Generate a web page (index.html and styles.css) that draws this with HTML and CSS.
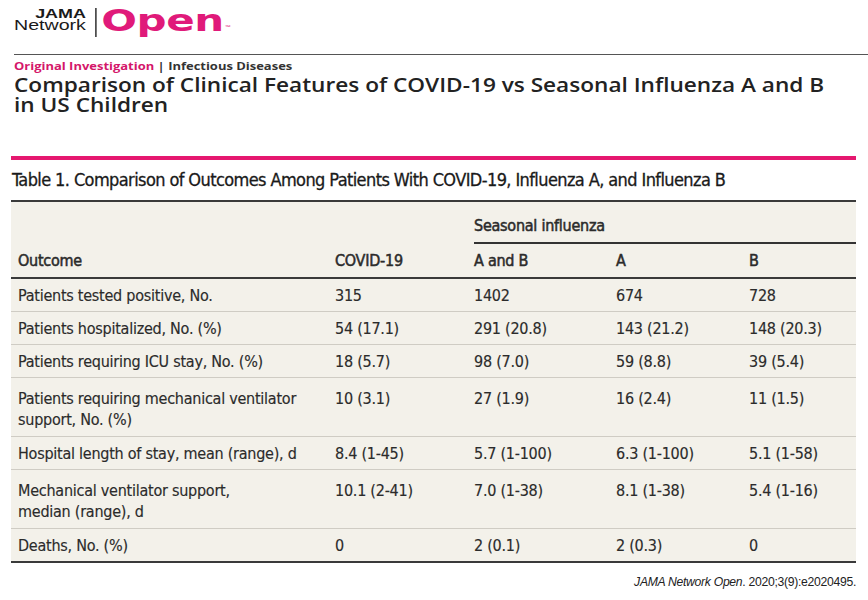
FILE: index.html
```html
<!DOCTYPE html>
<html lang="en">
<head>
<meta charset="utf-8">
<title>JAMA Network Open – Table 1</title>
<link rel="stylesheet" href="styles.css">
</head>
<body>
<header class="masthead">
  <div class="logo">
    <div class="logo-jn"><span class="logo-jama">JAMA</span><span class="logo-network">Network</span></div>
    <span class="logo-bar"></span>
    <span class="logo-open">Open</span><span class="logo-tm">™</span>
  </div>
</header>
<div class="rule"></div>
<div class="article-head">
  <p class="kicker"><span class="kicker-type">Original Investigation</span> <span class="kicker-sep">|</span> <span class="kicker-topic">Infectious Diseases</span></p>
  <h1 class="title">Comparison of Clinical Features of COVID-19 vs Seasonal Influenza A and B in US Children</h1>
</div>

<section class="tablebox">
  <h2 class="table-title">Table 1. Comparison of Outcomes Among Patients With COVID-19, Influenza A, and Influenza B</h2>
  <table class="data">
    <colgroup>
      <col class="c1"><col class="c2"><col class="c3"><col class="c4"><col class="c5">
    </colgroup>
    <thead>
      <tr class="hrow1">
        <th></th><th></th>
        <th colspan="3" class="span-cell"><div class="spanner">Seasonal influenza</div></th>
      </tr>
      <tr class="hrow2">
        <th>Outcome</th><th>COVID-19</th><th>A and B</th><th>A</th><th>B</th>
      </tr>
    </thead>
    <tbody>
      <tr><td>Patients tested positive, No.</td><td>315</td><td>1402</td><td>674</td><td>728</td></tr>
      <tr><td>Patients hospitalized, No. (%)</td><td>54 (17.1)</td><td>291 (20.8)</td><td>143 (21.2)</td><td>148 (20.3)</td></tr>
      <tr><td>Patients requiring ICU stay, No. (%)</td><td>18 (5.7)</td><td>98 (7.0)</td><td>59 (8.8)</td><td>39 (5.4)</td></tr>
      <tr class="two-line"><td>Patients requiring mechanical ventilator<br>support, No. (%)</td><td>10 (3.1)</td><td>27 (1.9)</td><td>16 (2.4)</td><td>11 (1.5)</td></tr>
      <tr><td>Hospital length of stay, mean (range), d</td><td>8.4 (1-45)</td><td>5.7 (1-100)</td><td>6.3 (1-100)</td><td>5.1 (1-58)</td></tr>
      <tr class="two-line"><td>Mechanical ventilator support,<br>median (range), d</td><td>10.1 (2-41)</td><td>7.0 (1-38)</td><td>8.1 (1-38)</td><td>5.4 (1-16)</td></tr>
      <tr><td>Deaths, No. (%)</td><td>0</td><td>2 (0.1)</td><td>2 (0.3)</td><td>0</td></tr>
    </tbody>
  </table>
</section>

<p class="cite"><em>JAMA Network Open</em>. 2020;3(9):e2020495.</p>
</body>
</html>
```

FILE: styles.css
```css
html, body {
  margin: 0;
  padding: 0;
  background: #ffffff;
}

body {
  font-family: "Open Sans", "Liberation Sans", sans-serif;
  color: #222;
  overflow-x: hidden;
}

/* ---------- masthead / logo ---------- */
.masthead {
  height: 54px;
  box-sizing: border-box;
  padding: 6px 0 0 14px;
}

.logo {
  display: flex;
  align-items: flex-start;
  width: max-content;
  transform: scaleX(1.4);
  transform-origin: left top;
}

.logo-jn {
  display: flex;
  flex-direction: column;
  align-items: flex-end;
  padding-top: 3px;
  font-family: "Liberation Sans", Arial, sans-serif;
  color: #1a1a1a;
}

.logo-jama {
  font-weight: 700;
  font-size: 12.8px;
  line-height: 10px;
}

.logo-network {
  font-size: 14px;
  line-height: 13px;
}

.logo-bar {
  width: 1.5px;
  height: 29px;
  margin: 2px 3px 0 6.5px;
  background: #222;
}

.logo-open {
  font-family: "DejaVu Sans", sans-serif;
  font-weight: 700;
  font-size: 30px;
  line-height: 30px;
  letter-spacing: -0.3px;
  color: #e01a7a;
}

.logo-tm {
  align-self: flex-end;
  margin: 0 0 7px 1px;
  font-size: 5px;
  line-height: 5px;
  color: #e01a7a;
}

/* ---------- article header ---------- */
.rule {
  height: 1px;
  margin-left: 14px;
  background: #555;
}

.article-head {
  width: 700px;
  margin-left: 14px;
  transform: scaleX(1.19);
  transform-origin: left top;
}

.kicker {
  margin: 5px 0 0;
  font-size: 10.9px;
  font-weight: 700;
  line-height: 12px;
}

.kicker-type {
  color: #d4166a;
}

.kicker-sep,
.kicker-topic {
  color: #333;
}

.title {
  max-width: 690px;
  margin: 3px 0 0;
  font-size: 19px;
  font-weight: 600;
  line-height: 20px;
  color: #222;
}

/* ---------- table ---------- */
.tablebox {
  margin: 41px 12px 0 11px;
  border-top: 4px solid #e5186f;
}

.table-title {
  margin: 0;
  padding-left: 1px;
  font-family: "DejaVu Sans Condensed", "DejaVu Sans", sans-serif;
  font-stretch: condensed;
  font-size: 18px;
  font-weight: 400;
  line-height: 40px;
  letter-spacing: -0.6px;
  color: #1a1a1a;
  -webkit-text-stroke: 0.3px #1a1a1a;
  white-space: nowrap;
}

.data {
  width: 100%;
  table-layout: fixed;
  border-collapse: collapse;
  background: #f3f1ea;
  border-top: 2px solid #3a3a3a;
  border-bottom: 2px solid #3a3a3a;
  font-family: "DejaVu Sans Condensed", "DejaVu Sans", sans-serif;
  font-stretch: condensed;
  font-size: 16px;
  letter-spacing: -0.25px;
  color: #2b2b2b;
}

.c1 { width: 317px; }
.c2 { width: 139px; }
.c3 { width: 142px; }
.c4 { width: 133px; }
.c5 { width: 114px; }

.data th {
  text-align: left;
  font-weight: 400;
  line-height: 21px;
  padding: 0 7px;
  color: #2b2b2b;
  -webkit-text-stroke: 0.5px #2b2b2b;
}

.hrow1 th {
  padding: 0;
}

.hrow1 .span-cell {
  padding-left: 7px;
}

.spanner {
  padding: 14px 0 6px;
  line-height: 20px;
  border-bottom: 2px solid #333;
}

.hrow2 th {
  padding: 6px 7px 6px;
  border-bottom: 2px solid #3a3a3a;
}

.data td {
  padding: 6px 7px 5px;
  line-height: 21px;
  vertical-align: top;
  border-top: 1px solid #cfccc4;
  -webkit-text-stroke: 0.15px #2b2b2b;
}

.data .two-line td {
  padding: 10px 7px 6px;
}

.data tbody tr:first-child td {
  border-top: none;
}

/* ---------- citation ---------- */
.cite {
  margin: 12px 12px 0 0;
  text-align: right;
  font-family: "Liberation Sans", Arial, sans-serif;
  font-size: 12.2px;
  line-height: 14px;
  letter-spacing: -0.3px;
  color: #222;
}
```
